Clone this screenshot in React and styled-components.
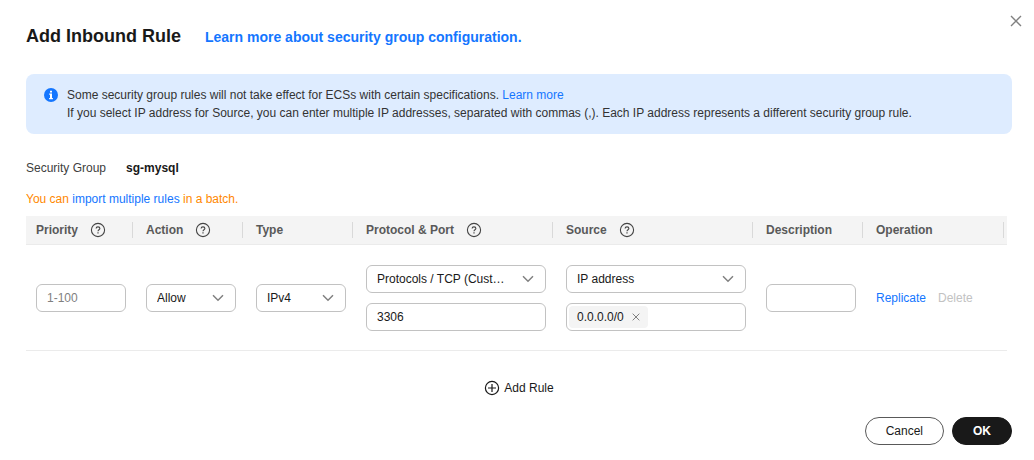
import React, { useState } from 'react';
import styled, { createGlobalStyle, css } from 'styled-components';

const columns = [
  { key: 'priority', title: 'Priority', width: 110, help: true },
  { key: 'action', title: 'Action', width: 110, help: true },
  { key: 'type', title: 'Type', width: 110 },
  { key: 'protocol', title: 'Protocol & Port', width: 200, help: true },
  { key: 'source', title: 'Source', width: 200, help: true },
  { key: 'description', title: 'Description', width: 110 },
  { key: 'operation', title: 'Operation' },
];

function CrossIcon({ size }) {
  return (
    <svg width={size} height={size} viewBox="0 0 12 12" fill="none" stroke="currentColor" strokeWidth="1.4" aria-hidden="true">
      <path d="M1 1l10 10M11 1L1 11" />
    </svg>
  );
}

function InfoIcon() {
  return (
    <svg width="14" height="14" viewBox="0 0 14 14" aria-hidden="true">
      <circle cx="7" cy="7" r="7" fill="#1476ff" />
      <path d="M6 2.8h2v1.7H6zM5.2 5.6H8v4.5h.9v1.1H5.1v-1.1H6V6.7h-.8z" fill="#fff" />
    </svg>
  );
}

function HelpIcon() {
  return (
    <svg width="16" height="16" viewBox="0 0 16 16" fill="none" stroke="currentColor" aria-hidden="true">
      <circle cx="8" cy="8" r="6.6" strokeWidth="1.1" />
      <path d="M6.1 6.6c0-1.1.8-1.7 1.9-1.7s1.9.6 1.9 1.6c0 1.2-1.9 1.3-1.9 2.7" strokeWidth="1.1" />
      <path d="M8 10.2v1.3" strokeWidth="1.2" />
    </svg>
  );
}

function PlusIcon() {
  return (
    <svg width="16" height="16" viewBox="0 0 16 16" fill="none" stroke="currentColor" strokeWidth="1.2" aria-hidden="true">
      <circle cx="8" cy="8" r="6.6" />
      <path d="M4 8h8M8 4v8" />
    </svg>
  );
}

function SelectBox({ label, children }) {
  return (
    <SelectWrap>
      <Select aria-label={label}>{children}</Select>
      <Chevron width="12" height="8" viewBox="0 0 12 8" aria-hidden="true">
        <path d="M1 1.2l5 5 5-5" />
      </Chevron>
    </SelectWrap>
  );
}

function App() {
  const [port, setPort] = useState('3306');
  const [addresses, setAddresses] = useState(['0.0.0.0/0']);

  return (
    <Dialog role="dialog" aria-labelledby="dialog-title">
      <GlobalStyle />
      <CloseButton type="button" aria-label="Close">
        <CrossIcon size={12} />
      </CloseButton>

      <Header>
        <Title id="dialog-title">Add Inbound Rule</Title>
        <HeaderLink href="#configuration">Learn more about security group configuration.</HeaderLink>
      </Header>

      <Notice>
        <NoticeIcon>
          <InfoIcon />
        </NoticeIcon>
        <div>
          <p>
            Some security group rules will not take effect for ECSs with certain specifications.{' '}
            <Link href="#specifications">Learn more</Link>
          </p>
          <p>
            If you select IP address for Source, you can enter multiple IP addresses, separated with commas (,). Each IP
            address represents a different security group rule.
          </p>
        </div>
      </Notice>

      <Group>
        <span>Security Group</span>
        <strong>sg-mysql</strong>
      </Group>

      <BatchTip>
        You can <Link href="#import">import multiple rules</Link> in a batch.
      </BatchTip>

      <Table>
        <colgroup>
          {columns.map((col) => (
            <Col key={col.key} $width={col.width} />
          ))}
        </colgroup>
        <thead>
          <tr>
            {columns.map((col) => (
              <Th key={col.key} scope="col">
                <HeadCell>
                  {col.title}
                  {col.help && (
                    <HelpButton type="button" aria-label={`About ${col.title}`}>
                      <HelpIcon />
                    </HelpButton>
                  )}
                </HeadCell>
              </Th>
            ))}
          </tr>
        </thead>
        <tbody>
          <tr>
            <Td>
              <Input aria-label="Priority" placeholder="1-100" />
            </Td>
            <Td>
              <SelectBox label="Action">
                <option>Allow</option>
                <option>Deny</option>
              </SelectBox>
            </Td>
            <Td>
              <SelectBox label="Type">
                <option>IPv4</option>
                <option>IPv6</option>
              </SelectBox>
            </Td>
            <Td>
              <Stack>
                <SelectBox label="Protocol">
                  <option>Protocols / TCP (Custom ports)</option>
                  <option>Protocols / UDP (Custom ports)</option>
                </SelectBox>
                <Input aria-label="Port" value={port} onChange={(e) => setPort(e.target.value)} />
              </Stack>
            </Td>
            <Td>
              <Stack>
                <SelectBox label="Source">
                  <option>IP address</option>
                  <option>Security group</option>
                </SelectBox>
                <TagField>
                  {addresses.map((ip) => (
                    <Tag key={ip}>
                      {ip}
                      <TagRemove
                        type="button"
                        aria-label={`Remove ${ip}`}
                        onClick={() => setAddresses(addresses.filter((a) => a !== ip))}
                      >
                        <CrossIcon size={8} />
                      </TagRemove>
                    </Tag>
                  ))}
                  <TagInput aria-label="IP addresses" />
                </TagField>
              </Stack>
            </Td>
            <Td>
              <Input aria-label="Description" />
            </Td>
            <Td>
              <Operations>
                <TextButton type="button">Replicate</TextButton>
                <TextButton type="button" disabled>
                  Delete
                </TextButton>
              </Operations>
            </Td>
          </tr>
        </tbody>
      </Table>

      <AddRule type="button">
        <PlusIcon />
        Add Rule
      </AddRule>

      <Footer>
        <Button type="button">Cancel</Button>
        <Button type="button" $primary>
          OK
        </Button>
      </Footer>
    </Dialog>
  );
}

export default App;

const GlobalStyle = createGlobalStyle`
  * {
    box-sizing: border-box;
  }
  body {
    margin: 0;
    background: #fff;
    color: #191919;
    font: 12px/18px "Liberation Sans", Arial, sans-serif;
  }
  p {
    margin: 0;
  }
  button, input, select {
    font: inherit;
    color: inherit;
  }
  button {
    padding: 0;
    border: 0;
    background: none;
    cursor: pointer;
  }
  svg {
    display: block;
    flex: none;
  }
`;

const Dialog = styled.div`
  position: relative;
  padding: 24px 22px 15px 26px;
`;

const CloseButton = styled.button`
  position: absolute;
  top: 15px;
  right: 12px;
  color: #808080;
`;

const Header = styled.header`
  display: flex;
  align-items: baseline;
  gap: 24px;
  margin-bottom: 26px;
`;

const Title = styled.h1`
  margin: 0;
  font-size: 18px;
  line-height: 24px;
  font-weight: 700;
`;

const Link = styled.a`
  color: #1476ff;
  text-decoration: none;
`;

const HeaderLink = styled(Link)`
  font-size: 14px;
  font-weight: 700;
`;

const Notice = styled.div`
  display: flex;
  gap: 9px;
  padding: 12px 18px;
  border-radius: 8px;
  background: #deecff;
  color: #333;
`;

const NoticeIcon = styled.span`
  padding-top: 2px;
`;

const Group = styled.div`
  display: flex;
  gap: 20px;
  margin-top: 25px;
  color: #404040;

  strong {
    color: #191919;
  }
`;

const BatchTip = styled.p`
  margin: 13px 0 8px;
  color: #ff8800;
`;

const Table = styled.table`
  width: calc(100% - 5px);
  table-layout: fixed;
  border-collapse: separate;
  border-spacing: 0;
`;

const Col = styled.col`
  width: ${(props) => (props.$width ? `${props.$width}px` : 'auto')};
`;

const Th = styled.th`
  height: 29px;
  padding: 0 3px 0 10px;
  border-bottom: 1px solid #ebebeb;
  background: #f4f4f4;
  color: #595959;
  text-align: left;
`;

const HeadCell = styled.div`
  display: flex;
  align-items: center;
  gap: 12px;
  height: 16px;
  border-right: 1px solid #d9d9d9;
`;

const HelpButton = styled.button`
  color: #444;
`;

const Td = styled.td`
  padding: 20px 10px 19px;
  border-bottom: 1px solid #ebebeb;
  vertical-align: middle;
`;

const Stack = styled.div`
  display: grid;
  grid-template-columns: minmax(0, 1fr);
  gap: 10px;
`;

const field = css`
  width: 100%;
  height: 28px;
  border: 1px solid #c2c2c2;
  border-radius: 6px;
  background: #fff;
`;

const Input = styled.input`
  ${field}
  display: block;
  padding: 0 10px;

  &::placeholder {
    color: #808080;
    opacity: 1;
  }
`;

const SelectWrap = styled.div`
  display: grid;
  grid-template-columns: minmax(0, 1fr);
  align-items: center;

  > * {
    grid-area: 1 / 1;
  }
`;

const Select = styled.select`
  ${field}
  appearance: none;
  padding: 0 40px 0 10px;
  text-overflow: ellipsis;
`;

const Chevron = styled.svg`
  justify-self: end;
  margin-right: 12px;
  fill: none;
  stroke: #808080;
  stroke-width: 1.5;
  pointer-events: none;
`;

const TagField = styled.div`
  ${field}
  display: flex;
  align-items: center;
  gap: 4px;
  padding: 0 2px;
`;

const Tag = styled.span`
  display: flex;
  align-items: center;
  gap: 8px;
  height: 22px;
  padding: 0 8px;
  border-radius: 4px;
  background: #f4f4f4;
`;

const TagRemove = styled.button`
  color: #777;
`;

const TagInput = styled.input`
  flex: 1;
  min-width: 0;
  padding: 0;
  border: 0;
  outline: 0;
  background: none;
`;

const Operations = styled.div`
  display: flex;
  gap: 12px;
`;

const TextButton = styled.button`
  color: #1476ff;

  &:disabled {
    color: #c2c2c2;
    cursor: not-allowed;
  }
`;

const AddRule = styled.button`
  display: flex;
  align-items: center;
  gap: 4px;
  margin: 28px auto 20px;
`;

const Footer = styled.footer`
  display: flex;
  justify-content: flex-end;
  gap: 8px;
`;

const Button = styled.button`
  height: 28px;
  padding: 0 20px;
  border: 1px solid #595959;
  border-radius: 14px;
  background: #fff;

  ${(props) =>
    props.$primary &&
    css`
      border-color: #191919;
      background: #191919;
      color: #fff;
      font-weight: 700;
    `}
`;
